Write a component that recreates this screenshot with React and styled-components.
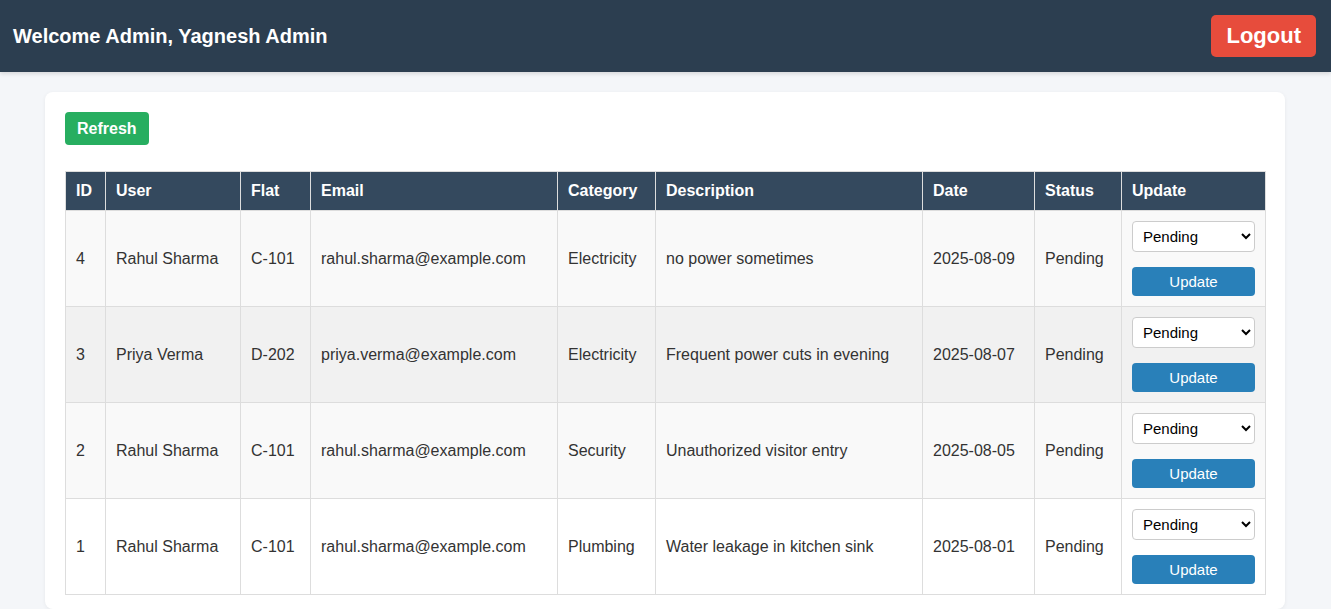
import React from 'react';
import styled, { createGlobalStyle } from 'styled-components';

const GlobalStyle = createGlobalStyle`
  body {
    margin: 0;
    background: #f4f6f9;
    font-family: "Liberation Sans", Arial, sans-serif;
    color: #333;
  }
`;

// 상단 헤더
const Header = styled.header`
  height: 72px;
  box-sizing: border-box;
  padding: 0 15px 0 13px;
  background: #2c3e50;
  display: flex;
  align-items: center;
  justify-content: space-between;
  box-shadow: 0 2px 4px rgba(0, 0, 0, 0.12);
`;

const Title = styled.h2`
  margin: 0;
  font-size: 20px;
  font-weight: bold;
  color: #fff;
`;

const LogoutButton = styled.button`
  font-family: inherit;
  font-size: 22px;
  font-weight: bold;
  line-height: 26px;
  color: #fff;
  background: #e74c3c;
  border: 0;
  border-radius: 5px;
  padding: 8px 15px;
  cursor: pointer;
`;

const Card = styled.main`
  width: 1240px;
  box-sizing: border-box;
  margin: 20px 46px 0 45px;
  padding: 20px 20px 14px;
  background: #fff;
  border-radius: 8px;
  box-shadow: 0 1px 4px rgba(0, 0, 0, 0.06);
`;

const RefreshButton = styled.button`
  font-family: inherit;
  font-size: 16px;
  font-weight: bold;
  line-height: 19px;
  color: #fff;
  background: #27ae60;
  border: 0;
  border-radius: 4px;
  padding: 7px 12px;
  cursor: pointer;
`;

const Table = styled.table`
  width: 1200px;
  margin-top: 26px;
  border-collapse: collapse;
  table-layout: fixed;
  font-size: 16px;

  th, td {
    border: 1px solid #ddd;
    padding: 10px;
    text-align: left;
    line-height: 19px;
  }

  th {
    background: #34495e;
    color: #fff;
    font-weight: bold;
    line-height: 18px;
  }
`;

const Row = styled.tr`
  background: ${props => props.$bg};

  td {
    vertical-align: middle;
    color: #333;
  }
`;

const Actions = styled.div`
  display: flex;
  flex-direction: column;
  gap: 15px;
`;

const StatusSelect = styled.select`
  width: 100%;
  height: 31px;
  font-family: inherit;
  font-size: 15px;
  color: #000;
  background: #fff;
  border: 1px solid #ccc;
  border-radius: 4px;
  padding: 0 6px;
`;

const UpdateButton = styled.button`
  width: 100%;
  height: 29px;
  font-family: inherit;
  font-size: 15px;
  color: #fff;
  background: #2980b9;
  border: 0;
  border-radius: 4px;
  cursor: pointer;
`;

const widths = [40, 135, 70, 247, 98, 267, 112, 87, 144];
const heads = ['ID', 'User', 'Flat', 'Email', 'Category', 'Description', 'Date', 'Status', 'Update'];

const complaints = [
  { id: 4, user: 'Rahul Sharma', flat: 'C-101', email: 'rahul.sharma@example.com', category: 'Electricity', desc: 'no power sometimes', date: '2025-08-09', status: 'Pending', bg: '#f9f9f9' },
  { id: 3, user: 'Priya Verma', flat: 'D-202', email: 'priya.verma@example.com', category: 'Electricity', desc: 'Frequent power cuts in evening', date: '2025-08-07', status: 'Pending', bg: '#f1f1f1' },
  { id: 2, user: 'Rahul Sharma', flat: 'C-101', email: 'rahul.sharma@example.com', category: 'Security', desc: 'Unauthorized visitor entry', date: '2025-08-05', status: 'Pending', bg: '#f9f9f9' },
  { id: 1, user: 'Rahul Sharma', flat: 'C-101', email: 'rahul.sharma@example.com', category: 'Plumbing', desc: 'Water leakage in kitchen sink', date: '2025-08-01', status: 'Pending', bg: '#ffffff' },
];

const App = () => {
  return (
    <>
      <GlobalStyle />
      <Header>
        <Title>Welcome Admin, Yagnesh Admin</Title>
        <LogoutButton>Logout</LogoutButton>
      </Header>

      <Card>
        <RefreshButton>Refresh</RefreshButton>

        <Table>
          <colgroup>
            {widths.map((w, i) => <col key={i} width={w} />)}
          </colgroup>
          <thead>
            <tr>
              {heads.map(h => <th key={h}>{h}</th>)}
            </tr>
          </thead>
          <tbody>
            {complaints.map(c => (
              <Row key={c.id} $bg={c.bg}>
                <td>{c.id}</td>
                <td>{c.user}</td>
                <td>{c.flat}</td>
                <td>{c.email}</td>
                <td>{c.category}</td>
                <td>{c.desc}</td>
                <td>{c.date}</td>
                <td>{c.status}</td>
                <td>
                  <Actions>
                    <StatusSelect defaultValue="Pending">
                      <option value="Pending">Pending</option>
                      <option value="In Progress">In Progress</option>
                      <option value="Resolved">Resolved</option>
                    </StatusSelect>
                    <UpdateButton>Update</UpdateButton>
                  </Actions>
                </td>
              </Row>
            ))}
          </tbody>
        </Table>
      </Card>
    </>
  );
};

export default App;
